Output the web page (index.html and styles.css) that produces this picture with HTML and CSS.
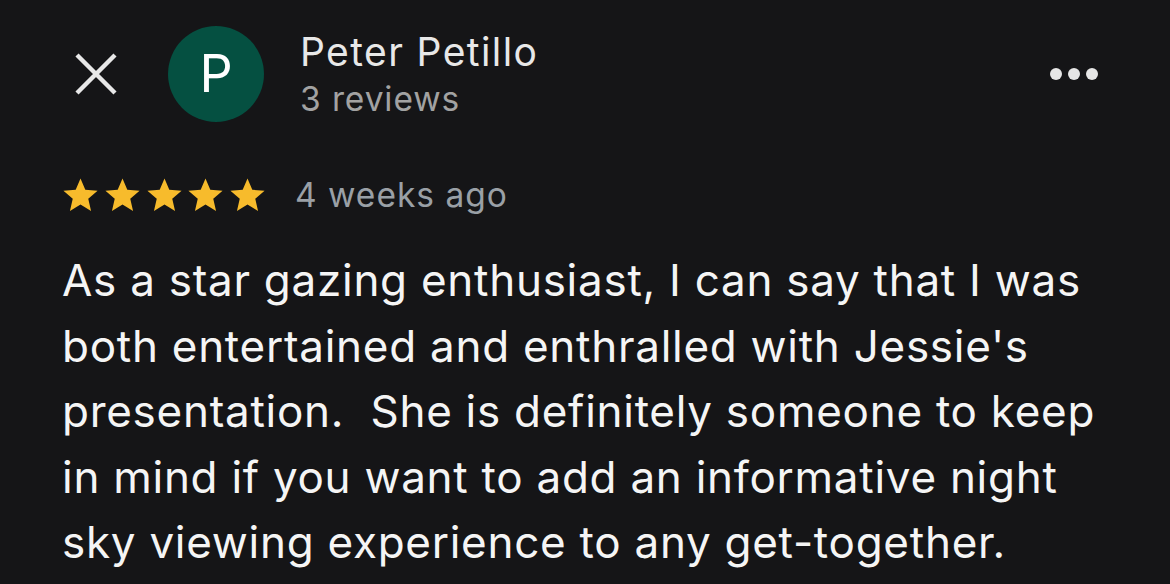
FILE: index.html
```html
<!DOCTYPE html>
<html lang="en">
<head>
<meta charset="utf-8">
<title>Review</title>
<link rel="stylesheet" href="styles.css">
</head>
<body>
<div class="review">
  <header class="header">
    <svg class="close" width="42" height="42" viewBox="0 0 42 42" aria-label="Close">
      <path d="M2 2 L40 40 M40 2 L2 40" stroke="#E8E8E8" stroke-width="4.4" stroke-linecap="butt" fill="none"/>
    </svg>
    <div class="avatar">P</div>
    <div class="info">
      <div class="name">Peter Petillo</div>
      <div class="count">3 reviews</div>
    </div>
    <svg class="more" width="48" height="12" viewBox="0 0 48 12" aria-label="More">
      <circle cx="6" cy="6" r="6" fill="#E6E6E6"/>
      <circle cx="24" cy="6" r="6" fill="#E6E6E6"/>
      <circle cx="42" cy="6" r="6" fill="#E6E6E6"/>
    </svg>
  </header>
  <div class="meta">
    <div class="stars">
      <svg class="star" viewBox="0 0 24 24"><path d="M12 17.27L18.18 21l-1.64-7.03L22 9.24l-7.19-.61L12 2 9.19 8.63 2 9.24l5.46 4.73L5.82 21z"/></svg>
      <svg class="star" viewBox="0 0 24 24"><path d="M12 17.27L18.18 21l-1.64-7.03L22 9.24l-7.19-.61L12 2 9.19 8.63 2 9.24l5.46 4.73L5.82 21z"/></svg>
      <svg class="star" viewBox="0 0 24 24"><path d="M12 17.27L18.18 21l-1.64-7.03L22 9.24l-7.19-.61L12 2 9.19 8.63 2 9.24l5.46 4.73L5.82 21z"/></svg>
      <svg class="star" viewBox="0 0 24 24"><path d="M12 17.27L18.18 21l-1.64-7.03L22 9.24l-7.19-.61L12 2 9.19 8.63 2 9.24l5.46 4.73L5.82 21z"/></svg>
      <svg class="star" viewBox="0 0 24 24"><path d="M12 17.27L18.18 21l-1.64-7.03L22 9.24l-7.19-.61L12 2 9.19 8.63 2 9.24l5.46 4.73L5.82 21z"/></svg>
    </div>
    <span class="time">4 weeks ago</span>
  </div>
  <p class="text">As a star gazing enthusiast, I can say that I was both entertained and enthralled with Jessie's presentation.&nbsp; She is definitely someone to keep in mind if you want to add an informative night sky viewing experience to any get-together.</p>
</div>
</body>
</html>
```

FILE: styles.css
```css
* { box-sizing: border-box; }

html, body {
  margin: 0;
  padding: 0;
  background: #151517;
}

body {
  width: 1170px;
  height: 584px;
  overflow: hidden;
  font-family: Inter, Roboto, "Liberation Sans", Arial, sans-serif;
}

.review {
  display: flex;
  flex-direction: column;
}

.header {
  display: flex;
  align-items: center;
  height: 122px;
  padding: 26px 72px 0 75px;
}

.close {
  flex: none;
  display: block;
}

.avatar {
  flex: none;
  width: 96px;
  height: 96px;
  margin-left: 51px;
  border-radius: 50%;
  background: #055041;
  color: #FFFFFF;
  font-size: 52px;
  line-height: 96px;
  text-align: center;
}

.info {
  flex: 1;
  margin-left: 36px;
  display: flex;
  flex-direction: column;
}

.name {
  font-size: 39px;
  line-height: 44px;
  letter-spacing: 1.4px;
  color: #E8E8E8;
}

.count {
  margin-top: 6px;
  font-size: 33.5px;
  line-height: 38px;
  letter-spacing: 0.9px;
  color: #A2A2A2;
}

.more {
  flex: none;
  display: block;
}

.meta {
  display: flex;
  align-items: center;
  margin-top: 52px;
  padding-left: 60px;
  height: 42px;
}

.stars {
  display: flex;
  gap: 0.75px;
}

.star {
  display: block;
  width: 41px;
  height: 41px;
  fill: #F7BB2C;
}

.time {
  margin-left: 27px;
  font-size: 33.5px;
  line-height: 40px;
  letter-spacing: 1px;
  color: #9AA0A6;
}

.text {
  margin: 32px 0 0 0;
  padding: 0 45px 0 62px;
  font-size: 44px;
  line-height: 65.5px;
  letter-spacing: 0.73px;
  color: #F5F5F5;
}
```
